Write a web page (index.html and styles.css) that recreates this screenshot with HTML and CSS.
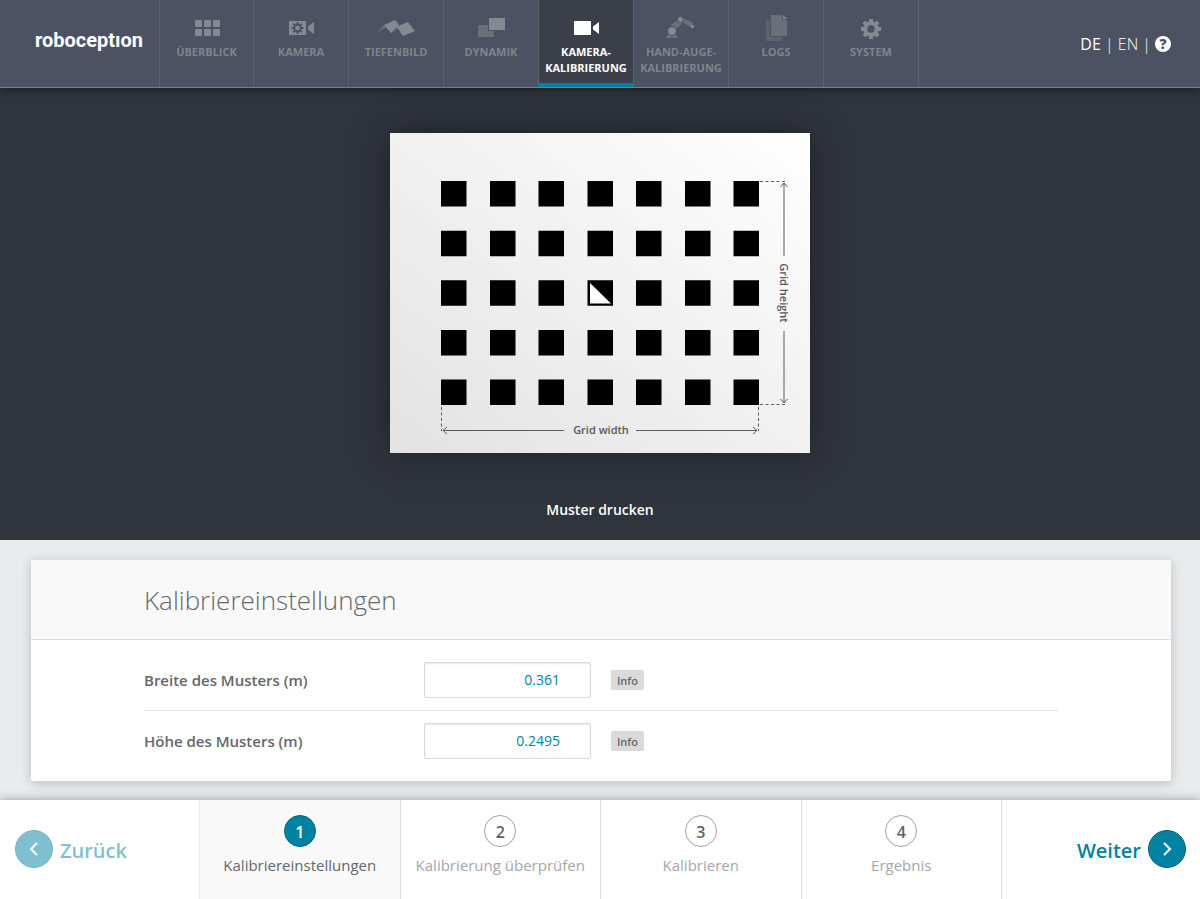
FILE: index.html
```html
<!DOCTYPE html>
<html lang="de">
<head>
<meta charset="utf-8">
<meta name="viewport" content="width=device-width, initial-scale=1">
<title>roboception – Kamerakalibrierung</title>
<link rel="stylesheet" href="styles.css">
</head>
<body>
<header class="topbar">
  <a class="logo" href="#">roboceptıon</a>
  <nav class="tabs">
    <a class="tab" href="#"><svg class="tab-icon" viewBox="0 0 40 28"><rect x="8" y="6" width="7" height="7" rx="1"/><rect x="17" y="6" width="7" height="7" rx="1"/><rect x="26" y="6" width="7" height="7" rx="1"/><rect x="8" y="15" width="7" height="7" rx="1"/><rect x="17" y="15" width="7" height="7" rx="1"/><rect x="26" y="15" width="7" height="7" rx="1"/></svg>ÜBERBLICK</a>
    <a class="tab" href="#"><svg class="tab-icon" viewBox="0 0 40 28"><rect x="8" y="7" width="17" height="14" rx=".5"/><path d="M33 8v12l-6-4.500v-3z"/><g class="cut"><circle cx="16.500" cy="14" r="3.300" fill="none" stroke-width="2"/><path d="M16.500 8v2.500M16.500 17.500v2.500M10.500 14h2.500M20 14h2.500M12.300 9.800l1.700 1.700M19 16.500l1.700 1.700M12.300 18.200l1.700-1.700M19 11.500l1.700-1.700" stroke-width="2"/></g></svg>KAMERA</a>
    <a class="tab" href="#"><svg class="tab-icon" viewBox="0 0 40 28"><path class="dim" d="M1 18l7-7 2 2.500zM15 19l6.500-8.500 2 2.500z"/><path d="M8 11l11-5 4 4.500-8 8.500zM20.500 12.500L32 8l7 9-12 5z"/></svg>TIEFENBILD</a>
    <a class="tab" href="#"><svg class="tab-icon" viewBox="0 0 40 28"><path class="dim" d="M7 11h10v6h6v6H7z"/><rect x="18" y="4" width="16" height="12"/></svg>DYNAMIK</a>
    <a class="tab tab-active" href="#" aria-current="page"><svg class="tab-icon" viewBox="0 0 40 28"><rect x="8" y="7" width="17" height="14" rx=".5"/><path d="M33 8v12l-6-4.500v-3z"/></svg><span>KAMERA-<br>KALIBRIERUNG</span></a>
    <a class="tab" href="#"><svg class="tab-icon" viewBox="0 0 40 28"><path class="dim" d="M5 24l2-4h8l2 4zM10 11l6.500-5 4.500 3.500-6 6zM22.500 4l9.500 5-2 4.500-8-5z"/><g class="outlined"><circle cx="11" cy="17" r="4.500"/><circle cx="19.500" cy="5.500" r="3"/></g><circle cx="31.500" cy="12.500" r="1.700"/></svg><span>HAND-AUGE-<br>KALIBRIERUNG</span></a>
    <a class="tab" href="#"><svg class="tab-icon" viewBox="0 0 40 28"><path class="dimmer" d="M10 6h4v17h12v4H10z"/><path class="dim" d="M15 1h11v5h5v16H15z"/><path d="M27 1v4h4z"/></svg>LOGS</a>
    <a class="tab" href="#"><svg class="tab-icon" viewBox="0 0 40 28"><circle cx="20" cy="15" r="5.700" fill="none" class="ring"/><path class="teeth" d="M20 5v4M20 21v4M10 15h4M26 15h4M12.900 7.900l2.900 2.900M24.200 19.200l2.900 2.900M12.900 22.100l2.900-2.900M24.200 10.800l2.900-2.900"/></svg>SYSTEM</a>
  </nav>
  <div class="lang">
    <p class="lang-list"><a class="lang-on" href="#">DE</a> | <a href="#">EN</a> |</p>
    <a class="help" href="#" aria-label="Hilfe">?</a>
  </div>
</header>

<main class="main">
  <section class="hero">
    <svg class="pattern" viewBox="0 0 420 320" role="img" aria-label="Kalibriermuster">
      <defs>
        <linearGradient id="paper" x1="0" y1="1" x2="1" y2="0"><stop offset="0" stop-color="#e2e2e2"/><stop offset="1" stop-color="#fff"/></linearGradient>
        <g id="row"><path d="M51 0h25.500v25.500H51zM100 0h25.500v25.500H100zM148.500 0h25.500v25.500h-25.500zM197.500 0H223v25.500h-25.500zM246 0h25.500v25.500H246zM295 0h25.500v25.500H295zM343.500 0h25.500v25.500h-25.500z"/></g>
      </defs>
      <rect width="420" height="320" fill="url(#paper)"/>
      <use href="#row" y="48"/><use href="#row" y="97.700"/><use href="#row" y="147.300"/><use href="#row" y="197"/><use href="#row" y="246.600"/>
      <path d="M200 150v20.500h21z" fill="#fff"/>
      <g class="guide">
        <path stroke-dasharray="3 2.500" d="M370 48.500h25M370 271.500h25M51.500 274v24M368.500 274v24"/>
        <path d="M394 50v73M394 198v72M53 297.500h121M246 297.500h121"/>
        <path d="M390.500 54l3.500-4 3.500 4M390.500 266l3.500 4 3.500-4M57 294l-4 3.500 4 3.500M363 294l4 3.500-4 3.500"/>
      </g>
      <text class="guide-text" x="211" y="301">Grid width</text>
      <text class="guide-text" transform="translate(390 160) rotate(90)">Grid height</text>
    </svg>
    <button class="print" type="button">Muster drucken</button>
  </section>

  <section class="card">
    <h1 class="card-title">Kalibriereinstellungen</h1>
    <form class="card-body">
      <div class="field">
        <label for="grid-width">Breite des Musters (m)</label>
        <input id="grid-width" type="text" value="0.361">
        <button class="info" type="button">Info</button>
      </div>
      <div class="field">
        <label for="grid-height">Höhe des Musters (m)</label>
        <input id="grid-height" type="text" value="0.2495">
        <button class="info" type="button">Info</button>
      </div>
    </form>
  </section>
</main>

<footer class="wizard">
  <button class="move move-back" type="button" disabled><span class="disc"><svg viewBox="0 0 36 36"><path d="M21 12l-6 6 6 6"/></svg></span><span class="move-text">Zurück</span></button>
  <a class="step step-active" href="#" aria-current="step"><span class="num">1</span>Kalibriereinstellungen</a>
  <a class="step" href="#"><span class="num">2</span>Kalibrierung überprüfen</a>
  <a class="step" href="#"><span class="num">3</span>Kalibrieren</a>
  <a class="step" href="#"><span class="num">4</span>Ergebnis</a>
  <button class="move move-next" type="button"><span class="move-text">Weiter</span><span class="disc"><svg viewBox="0 0 36 36"><path d="M15 12l6 6-6 6"/></svg></span></button>
</footer>
</body>
</html>
```
FILE: styles.css
```css
* { box-sizing: border-box; }
body {
  margin: 0;
  min-height: 100vh;
  display: flex;
  flex-direction: column;
  background: #eaebed;
  color: #65676b;
  font-family: "Open Sans", "Noto Sans", sans-serif;
  font-size: 14px;
}
a { color: inherit; text-decoration: none; }
button { font: inherit; color: inherit; border: 0; background: none; padding: 0; }

.topbar {
  position: relative;
  display: flex;
  height: 88px;
  background: #4c5261;
  border-bottom: 1px solid #777c86;
  box-shadow: 0 0 10px rgba(0, 0, 0, .6);
}
.logo {
  width: 159px;
  padding: 28px 0 0 35px;
  color: #fff;
  font: 700 20px/24px Roboto, sans-serif;
}
.tabs { display: flex; border-right: 1px solid #5b606e; }
.tab {
  display: flex;
  flex-direction: column;
  align-items: center;
  width: 95px;
  padding-top: 14px;
  border-left: 1px solid #5b606e;
  color: #80848e;
  font-size: 11px;
  font-weight: 700;
  line-height: 16px;
  text-align: center;
  white-space: nowrap;
}
.tab:first-child { width: 94px; }
.tab-icon { width: 40px; height: 28px; margin-bottom: 2px; fill: #858993; }
.tab-icon .dim { fill: #6b6f79; }
.tab-icon .dimmer { fill: #5d626d; }
.tab-icon .cut { stroke: #4c5261; }
.tab-icon .outlined { stroke: #4c5261; }
.tab-icon .ring { stroke: #858993; stroke-width: 4; }
.tab-icon .teeth { stroke: #858993; stroke-width: 4; }
.tab-active {
  background: #3a3f4a;
  color: #fff;
  border-bottom: 4px solid #0083a2;
}
.tab-active .tab-icon { fill: #fff; }
.lang {
  display: flex;
  align-items: center;
  gap: 4px;
  margin-left: auto;
  padding-right: 29px;
  color: #fff;
}
.lang-list { margin: 0; font-size: 16px; font-weight: 300; }
.lang-on { font-weight: 400; }
.help {
  width: 16px;
  height: 16px;
  border-radius: 50%;
  background: #fff;
  color: #4c5261;
  font-size: 14px;
  font-weight: 800;
  line-height: 16px;
  text-align: center;
}

.main { flex: 1; }
.hero {
  display: flex;
  flex-direction: column;
  align-items: center;
  padding: 45px 0 20px;
  background: #30343d;
}
.pattern {
  width: 420px;
  height: 320px;
  margin-bottom: 47px;
  box-shadow: 0 0 30px rgba(20, 26, 32, .7);
}
.guide { fill: none; stroke: #5c5c60; stroke-width: 1; }
.guide-text { fill: #57575b; font-size: 11px; font-weight: 600; text-anchor: middle; }
.print { color: #fff; font-weight: 600; line-height: 20px; }

.card {
  margin: 20px 29px 19px 31px;
  border-radius: 2px;
  background: #fff;
  box-shadow: 0 2px 12px rgba(0, 0, 0, .2);
}
.card-title {
  height: 80px;
  margin: 0;
  padding: 0 113px;
  border-bottom: 1px solid #dedfe0;
  border-radius: 2px 2px 0 0;
  background: #f9f9f9;
  font-size: 26px;
  font-weight: 300;
  line-height: 80px;
}
.card-body { padding: 10px 113px; }
.field {
  display: flex;
  align-items: center;
  padding: 12px 0;
}
.field + .field { border-top: 1px solid #e3e3e3; }
.field label { width: 280px; font-size: 15px; font-weight: 600; }
.field input {
  width: 167px;
  height: 36px;
  margin: 0;
  padding: 0 30px 2px 10px;
  border: 1px solid #d9d9d9;
  border-radius: 2px;
  box-shadow: inset 0 1px 2px rgba(0, 0, 0, .1);
  color: #0083a2;
  font: inherit;
  text-align: right;
}
.info {
  width: 33px;
  height: 20px;
  margin-left: 20px;
  border-radius: 2px;
  background: #dadada;
  font-size: 11px;
  font-weight: 600;
}

.wizard {
  position: relative;
  display: grid;
  grid-template-columns: 199px repeat(4, 1fr) 199px;
  min-height: 99px;
  background: #fff;
  box-shadow: 0 0 10px rgba(0, 0, 0, .35);
}
.step {
  display: flex;
  flex-direction: column;
  align-items: center;
  gap: 8px;
  padding-top: 15px;
  border-left: 1px solid #dedfe0;
  color: #a5a6a9;
  font-size: 15px;
  line-height: 20px;
  text-align: center;
}
.step-active { background: #f9f9f9; border-left-color: #ececec; color: #65676b; }
.num {
  width: 32px;
  height: 32px;
  border: 1px solid #a2a3a5;
  border-radius: 50%;
  color: #5f6064;
  font-size: 16px;
  font-weight: 600;
  line-height: 32px;
}
.step-active .num { background: #0083a2; border-color: #066278; color: #fff; }
.move {
  display: flex;
  align-items: center;
  gap: 7px;
  padding: 0 14px 2px;
  color: #0083a2;
  font-size: 20px;
  font-weight: 600;
}
.move-text { padding-top: 4px; }
.move-back { padding-left: 15px; opacity: .5; }
.move-next { justify-content: flex-end; border-left: 1px solid #dedfe0; }
.disc {
  width: 38px;
  height: 38px;
  border: 1px solid #066278;
  border-radius: 50%;
  background: #0083a2;
}
.disc svg { display: block; fill: none; stroke: #fff; stroke-width: 2; }
```
